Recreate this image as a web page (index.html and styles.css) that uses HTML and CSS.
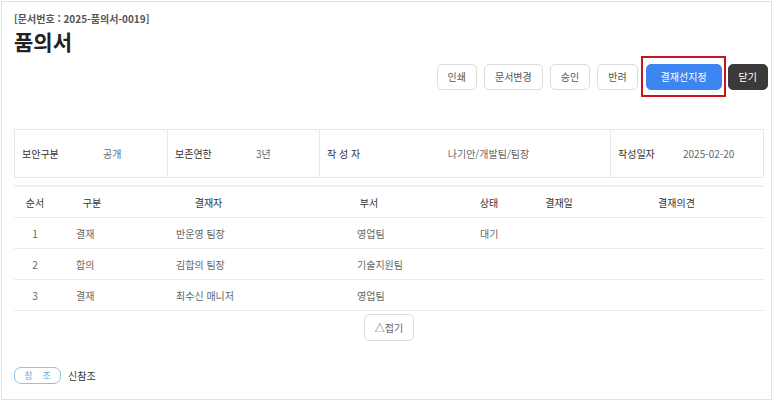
FILE: index.html
```html
<!DOCTYPE html>
<html lang="ko">
<head>
<meta charset="utf-8">
<title>품의서</title>
<link rel="stylesheet" href="styles.css">
</head>
<body>
<div class="page">
  <div class="doc-no">[문서번호 : 2025-품의서-0019]</div>
  <h1 class="title">품의서</h1>
  <div class="actions">
    <button class="btn">인쇄</button>
    <button class="btn">문서변경</button>
    <button class="btn">승인</button>
    <button class="btn">반려</button>
    <span class="highlight"><button class="btn btn-primary">결재선지정</button></span>
    <button class="btn btn-dark">닫기</button>
  </div>

  <div class="info">
    <div class="info-cell c1"><span class="lbl">보안구분</span><span class="val">공개</span></div>
    <div class="info-cell c2"><span class="lbl">보존연한</span><span class="val">3년</span></div>
    <div class="info-cell c3"><span class="lbl">작 성 자</span><span class="val">나기안/개발팀/팀장</span></div>
    <div class="info-cell c4"><span class="lbl">작성일자</span><span class="val">2025-02-20</span></div>
  </div>

  <div class="approval">
    <div class="row head">
      <div>순서</div><div>구분</div><div>결재자</div><div>부서</div><div>상태</div><div>결재일</div><div>결재의견</div>
    </div>
    <div class="row body">
      <div>1</div><div>결재</div><div>반운영 팀장</div><div>영업팀</div><div>대기</div><div></div><div></div>
    </div>
    <div class="row body">
      <div>2</div><div>합의</div><div>김합의 팀장</div><div>기술지원팀</div><div></div><div></div><div></div>
    </div>
    <div class="row body">
      <div>3</div><div>결재</div><div>최수신 매니저</div><div>영업팀</div><div></div><div></div><div></div>
    </div>
  </div>

  <div class="fold-wrap"><button class="fold">△접기</button></div>

  <div class="ref">
    <span class="ref-badge">참&nbsp;&nbsp;&nbsp;&nbsp;조</span>
    <span class="ref-name">신참조</span>
  </div>
</div>
</body>
</html>
```

FILE: styles.css
```css
* { box-sizing: border-box; }
html, body { margin: 0; padding: 0; background: #fff; }
body {
  font-family: "Noto Sans CJK KR", "Noto Sans", sans-serif;
  color: #333;
  font-size: 10px;
}
.page {
  position: relative;
  margin: 1px 0 0 1px;
  width: 771px;
  height: 399px;
  border: 1px solid #e2e2e2;
  padding: 10px 3px 0 12px;
}
.doc-no {
  font-size: 10px;
  font-weight: 700;
  color: #555;
  line-height: 14px;
}
.title {
  margin: 2px 0 0 0;
  font-size: 21px;
  font-weight: 700;
  color: #222;
  line-height: 26px;
}
.actions {
  display: flex;
  justify-content: flex-end;
  gap: 7px;
  margin-top: 10px;
}
.btn {
  font-family: inherit;
  font-size: 10px;
  height: 26px;
  padding: 0 10px;
  border: 1px solid #dcdcdc;
  border-radius: 5px;
  background: #fff;
  color: #555;
  line-height: 24px;
}
.highlight {
  position: relative;
  display: inline-flex;
  margin-left: 1px;
}
.highlight::after {
  content: "";
  position: absolute;
  left: -5px; right: -4px; top: -8px; bottom: -7px;
  border: 2px solid #c8141e;
}
.btn-primary {
  background: #3d86f2;
  border-color: #3d86f2;
  color: #fff;
  padding: 0 14px;
}
.btn-dark {
  background: #3a3a3a;
  border-color: #3a3a3a;
  color: #fff;
  margin-left: -1px;
}
.info {
  display: grid;
  grid-template-columns: 152px 152px 291px 1fr;
  margin-top: 39px;
  margin-right: 4px;
  height: 49px;
  border: 1px solid #e8e8e8;
}
.info-cell {
  display: flex;
  align-items: center;
  padding-left: 7px;
  border-left: 1px solid #e8e8e8;
}
.info-cell:first-child { border-left: 0; }
.lbl { color: #333; }
.val { color: #666; }
.c1 .lbl, .c2 .lbl { width: 81px; }
.c3 .lbl { width: 80px; }
.c3 .val { flex: 1; text-align: center; padding-right: 40px; }
.c4 .lbl { width: 65px; }
.approval {
  margin-top: 7px;
  margin-right: 4px;
  border-top: 2px solid #f0f0f0;
}
.row {
  display: grid;
  grid-template-columns: 42px 72px 161px 160px 80px 60px 1fr;
  height: 31px;
  align-items: center;
  border-bottom: 1px solid #ebebeb;
}
.row.head > div { text-align: center; color: #333; }
.row.body > div { color: #666; }
.row.body > div:nth-child(1) { text-align: center; }
.row.body > div:nth-child(2) { padding-left: 20px; }
.row.body > div:nth-child(3) { padding-left: 48px; }
.row.body > div:nth-child(4) { padding-left: 68px; }
.row.body > div:nth-child(5) { padding-left: 31px; }
.fold-wrap {
  display: flex;
  justify-content: center;
  margin-right: 4px;
  padding-top: 3px;
}
.fold {
  font-family: inherit;
  font-size: 10px;
  height: 27px;
  width: 50px;
  padding: 0;
  border: 1px solid #dedede;
  border-radius: 5px;
  background: #fff;
  color: #666;
}
.ref {
  display: flex;
  align-items: center;
  gap: 7px;
  margin-top: 26px;
}
.ref-badge {
  display: inline-flex;
  align-items: center;
  justify-content: center;
  width: 47px;
  height: 17px;
  border: 1px solid #8ec3e3;
  border-radius: 7px;
  color: #6aaad6;
  font-size: 9px;
}
.ref-name { color: #333; }
```
